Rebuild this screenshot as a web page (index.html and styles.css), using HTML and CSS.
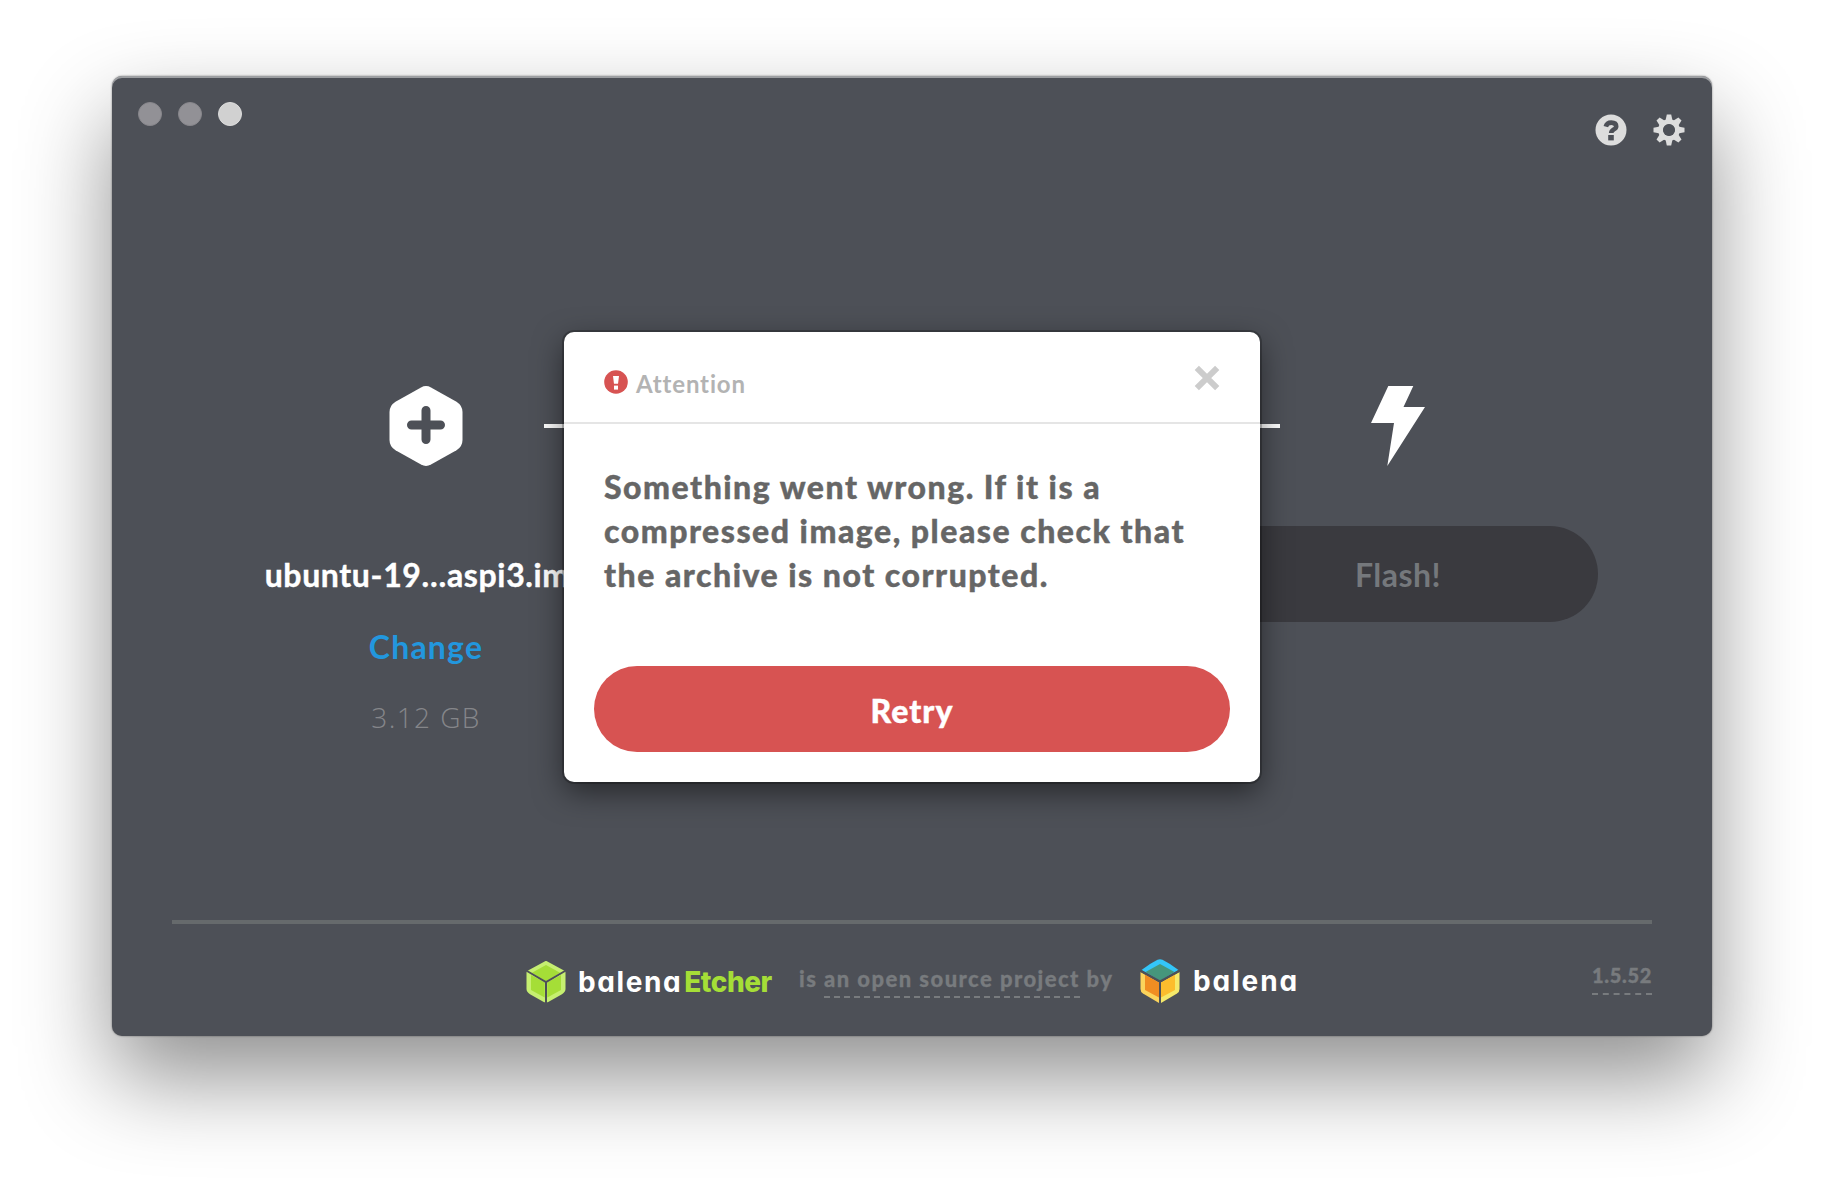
FILE: index.html
```html
<!DOCTYPE html>
<html lang="en">
<head>
<meta charset="utf-8">
<title>balenaEtcher</title>
<link rel="stylesheet" href="styles.css">
</head>
<body>
<div class="window">
  <header class="titlebar">
    <div class="lights"><span class="light"></span><span class="light"></span><span class="light light-on"></span></div>
    <div class="actions">
      <svg width="32" height="32" viewBox="0 0 32 32"><circle cx="16" cy="16" r="15.5" fill="#ddd"/><path d="M10.800 12.600C11.500 9.900 13.500 8.600 16.300 8.600C19.300 8.600 21.200 10 21.200 12.400C21.200 15.600 16.200 15.300 16.200 19" fill="none" stroke="#4d5057" stroke-width="4.600"/><rect x="13.200" y="21" width="5.600" height="5.400" fill="#4d5057"/></svg>
      <svg width="32" height="32" viewBox="-16 -16 32 32"><g fill="#ddd"><path id="tooth" d="M-3.600 -9L-2.200 -15.500H2.200L3.600 -9Z"/><use href="#tooth" transform="rotate(45)"/><use href="#tooth" transform="rotate(90)"/><use href="#tooth" transform="rotate(135)"/><use href="#tooth" transform="rotate(180)"/><use href="#tooth" transform="rotate(225)"/><use href="#tooth" transform="rotate(270)"/><use href="#tooth" transform="rotate(315)"/></g><circle r="8.300" fill="none" stroke="#ddd" stroke-width="5"/><circle r="6" fill="#4d5057"/></svg>
    </div>
  </header>
  <main class="steps">
    <section class="step">
      <svg class="step-icon" width="74" height="80" viewBox="0 0 74 80"><path d="M32 1.400Q37 -1.200 42 1.400L67.500 15.700Q73.500 19.500 73.500 26V54Q73.500 60.500 67.500 64.300L42 78.600Q37 81.200 32 78.600L6.500 64.300Q.5 60.500 .5 54V26Q.5 19.500 6.500 15.700Z" fill="#fff"/><path d="M37 24.500V53.500M22.500 39H51.500" stroke="#4d5057" stroke-width="9" stroke-linecap="round"/></svg>
      <div class="file">ubuntu-19…aspi3.img</div>
      <div class="change">Change</div>
      <div class="size">3.12 GB</div>
    </section>
    <div class="connector"></div>
    <section class="step">
      <svg class="step-icon" width="54" height="80" viewBox="0 0 54 80"><path d="M17.300 0H42.300L32.500 21H54L16.300 80L23 37H0Z" fill="#fff"/></svg>
      <div class="flash">Flash!</div>
    </section>
  </main>
  <footer class="footer">
    <div class="credits">
      <svg class="cube" width="40" height="44" viewBox="0 0 40 44"><g stroke-linejoin="round" stroke-width="2"><path d="M20 3L37.500 12.300L20 21.800L2.500 12.300Z" fill="#c6ef71" stroke="#c6ef71"/><path d="M1.500 13.500L18.700 23.500V42.300L4.500 34.300Q1.500 32.500 1.500 30Z" fill="#c6ef71" stroke="#c6ef71"/><path d="M38.500 13.500L21.300 23.500V42.300L35.500 34.300Q38.500 32.500 38.500 30Z" fill="#c6ef71" stroke="#c6ef71"/></g><path d="M20 6L34 13.800L20 22.300L6 13.800ZM5 16L18.700 23.500V38.500L5 31ZM35 16L21.300 23.500V38.500L35 31Z" fill="#a5de37"/><path d="M1 12L20 23L39 12M20 23V44" fill="none" stroke="#4d5057" stroke-width="2"/></svg>
      <div class="brand brand-etcher">balena<b>Etcher</b></div>
      <div class="tagline">is <span class="link">an open source project</span> by</div>
      <svg class="cube" width="40" height="44" viewBox="0 0 40 44"><path d="M1.500 11Q10 4.500 17.500 .8Q20 -.3 22.500 .8Q30 4.500 38.500 11L20 22Z" fill="#34c6f8"/><path d="M20 5L34.500 13L20 21.800L5.500 13Z" fill="#46967c"/><path d="M.5 13L19 23.500V44L3 34.500Q.5 33 .5 30Z" fill="#fbd45c"/><path d="M5 15.500L19 23.500V38.500L5 31Z" fill="#f08d22"/><path d="M39.500 13L21 23.500V44L37 34.500Q39.500 33 39.500 30Z" fill="#f5e96a"/><path d="M35 15.500L21 23.500V38.500L35 31Z" fill="#fcbd2d"/><path d="M1 12L20 22.500L39 12M20 22.500V44" fill="none" stroke="#4d5057" stroke-width="2"/></svg>
      <div class="brand brand-balena">balena</div>
    </div>
    <div class="version"><span class="link">1.5.52</span></div>
  </footer>
  <div class="modal">
    <div class="modal-head">
      <svg width="24" height="24" viewBox="0 0 24 24"><circle cx="12" cy="12" r="11.800" fill="#d75352"/><path d="M9 6H15L14 13.700H10Z" fill="#fff"/><rect x="10" y="15.600" width="4" height="4" fill="#fff"/></svg>
      <span class="attention">Attention</span>
      <svg class="close" width="26" height="26" viewBox="0 0 26 26"><path d="M2.800 2.800L23.200 23.200M23.200 2.800L2.800 23.200" stroke="#ccc" stroke-width="6"/></svg>
    </div>
    <div class="message">Something went wrong. If it is a compressed image, please check that the archive is not corrupted.</div>
    <div class="retry">Retry</div>
  </div>
</div>
</body>
</html>
```
FILE: styles.css
```css
* { box-sizing: border-box; }
html { background: #fff; }
body { margin: 0; height: 1184px; padding: 76px 112px 0; background: #fff; font-family: Lato, sans-serif; font-weight: 700; overflow: hidden; }
.window {
  position: relative; display: flex; flex-direction: column;
  width: 1600px; height: 960px;
  background: #4d5057; border-radius: 10px;
  box-shadow: 0 42px 90px rgba(0,0,0,.44), 0 0 2px rgba(0,0,0,.5), inset 0 2px 0 rgba(255,255,255,.45);
}
.titlebar { display: flex; justify-content: space-between; height: 100px; padding: 26px 27px 0 26px; }
.lights { display: flex; gap: 16px; }
.light { width: 24px; height: 24px; border-radius: 50%; background: #929196; border: 1px solid #88878c; }
.light-on { background: #d1d1d1; border-color: #dcdcdc; }
.actions { display: flex; gap: 26px; padding-top: 12px; }
.steps { display: flex; flex: 1; padding: 210px 114px 0; }
.step { display: flex; flex-direction: column; align-items: center; flex: none; width: 400px; }
.step:last-child { margin-left: -200px; }
.step-icon { display: block; }
.connector { width: 736px; height: 4px; margin: 38px 118px 0 -82px; background: #fff; flex: none; }
.file, .change, .size { white-space: nowrap; line-height: 40px; font-size: 32px; color: #fff; }
.file { margin-top: 89px; letter-spacing: .65px; -webkit-text-stroke: .4px; }
.change { margin-top: 32px; color: #2297de; letter-spacing: 1.200px; }
.size { margin-top: 30px; color: #85868a; font-family: "Open Sans", sans-serif; font-weight: 300; font-size: 28px; letter-spacing: 1.400px; }
.flash { width: 400px; height: 96px; margin-top: 60px; border-radius: 48px; background: #3a3a3f; color: #75787c; font-size: 32px; line-height: 97px; text-align: center; letter-spacing: .5px; }
.footer { display: flex; height: 116px; margin: 0 60px; border-top: 4px solid #666a6c; }
.credits { display: flex; align-items: flex-start; padding: 35px 0 0 354px; }
.brand { color: #fff; font-family: Inter, sans-serif; font-size: 28px; line-height: 36px; white-space: nowrap; font-feature-settings: "cv11"; letter-spacing: 1.600px; }
.brand b { color: #a5de37; font-weight: 800; margin-left: 2px; letter-spacing: -.5px; }
.brand-etcher { margin: 5px 0 0 12px; width: 221px; }
.brand-balena { margin: 4px 0 0 13px; letter-spacing: 1.900px; }
.tagline { color: #787b7e; font-size: 22px; font-weight: 900; white-space: nowrap; letter-spacing: 1.450px; line-height: 26px; padding-top: 7px; width: 341px; -webkit-text-stroke: .3px; }
.link { border-bottom: 2px dashed #787b7e; padding-bottom: 4px; }
.version { color: #787b7e; margin-left: auto; font-size: 20px; font-weight: 900; padding-top: 39px; letter-spacing: .7px; -webkit-text-stroke: .4px; }
.version .link { padding-bottom: 6px; }
.modal { position: absolute; left: 452px; top: 256px; width: 696px; height: 450px; background: #fff; border-radius: 10px; box-shadow: 0 0 0 2px rgba(0,0,0,.22), 0 10px 30px rgba(0,0,0,.5); }
.modal-head { display: flex; height: 92px; border-bottom: 2px solid #e5e5e5; padding: 38px 40px 0; }
.attention { margin-left: 8px; color: #b3b3b3; font-size: 24px; line-height: 28px; letter-spacing: .85px; }
.close { margin: -5px 0 0 auto; }
.message { padding: 41px 40px 0; font-size: 32px; line-height: 44px; color: #666; font-weight: 900; letter-spacing: 1.500px; -webkit-text-stroke: .4px; }
.retry { height: 86px; margin: 69px 30px 0; border-radius: 43px; background: #d75352; color: #fff; font-size: 32px; font-weight: 900; line-height: 90px; text-align: center; letter-spacing: 1px; -webkit-text-stroke: .4px; }
```
